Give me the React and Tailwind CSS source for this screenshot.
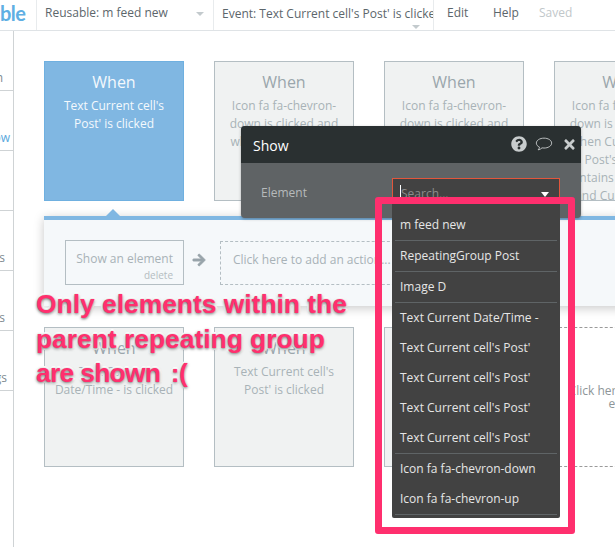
import React from "react";
import { FaQuestionCircle, FaTimes, FaArrowRight } from "react-icons/fa";

const OS = { fontFamily: '"Open Sans", sans-serif' };

function Card({ lines, active }) {
  return (
    <div className={`w-[140px] h-[140px] shrink-0 border overflow-hidden text-center pt-[9px] ${active ? "bg-[#80b7e2] border-[#6fb0e0] text-[#f4f9fd]" : "bg-[#f0f2f2] border-[#b4bec3] text-[#a8b2b7]"}`}>
      <div className={`text-[16px] leading-[22px] mb-[4px] ${active ? "text-[#f4f9fd]" : "text-[#9aa6ac]"}`}>When</div>
      {lines.map((l, i) => (
        <div key={i} className="text-[12px] leading-[18px] whitespace-nowrap">{l}</div>
      ))}
    </div>
  );
}

function SideRow({ label, pad, blue }) {
  return (
    <div className="h-[60px] border-b border-[#cfd3d5] flex items-end justify-end overflow-hidden pb-[3px]">
      <span className={`text-[12px] leading-[18px] shrink-0 ${pad} ${blue ? "text-[#59a8dd]" : "text-[#7d8a90]"}`}>{label}</span>
    </div>
  );
}

function Item({ children, line }) {
  return (
    <div className={`mx-[3px] px-[5px] h-[30px] flex items-center text-[12px] text-[#e6e6e6] whitespace-nowrap ${line ? "box-content border-b border-[#5f6466]" : ""}`}>
      {children}
    </div>
  );
}

export default function App() {
  return (
    <div className="relative w-[615px] h-[547px] overflow-hidden bg-white flex flex-col" style={OS}>
      <header className="h-[31px] shrink-0 flex border-b border-[#dfe3e6] text-[12px] text-[#5c666b]">
        <div className="w-[37px] shrink-0 border-r border-[#e8ebed] flex items-start pt-[1px] overflow-hidden">
          <span className="text-[#60afe3] text-[20px] leading-[24px] font-bold tracking-[-0.5px]" style={{ fontFamily: "Lato, sans-serif" }}>ble</span>
        </div>
        <div className="w-[177px] shrink-0 border-r border-[#e8ebed] relative pl-[8px] leading-[25px]">
          Reusable: m feed new
          <span className="absolute left-[159px] top-[12px] w-0 h-0 border-x-[4px] border-x-transparent border-t-[4px] border-t-[#c3cacd]" />
        </div>
        <div className="w-[220px] shrink-0 border-r border-[#e8ebed] relative pl-[8px] leading-[27px] overflow-hidden whitespace-nowrap">
          Event: Text Current cell's Post' is clicked
          <span className="absolute left-[198px] top-[25px] w-0 h-0 border-x-[4px] border-x-transparent border-t-[4px] border-t-[#c3cacd]" />
        </div>
        <div className="flex pl-[13px] leading-[25px]">
          <span className="w-[46px]">Edit</span>
          <span className="w-[46px]">Help</span>
          <span className="text-[#c1c7ca]">Saved</span>
        </div>
      </header>

      <div className="flex flex-1 min-h-0">
        <aside className="w-[14px] shrink-0 border-r border-[#cfd3d5]">
          <SideRow label="Design" pad="pr-[10px]" />
          <SideRow label="Workflow" pad="pr-[3px]" blue />
          <SideRow label="Data" pad="pr-[20px]" />
          <SideRow label="Styles" pad="pr-[8px]" />
          <SideRow label="Plugins" pad="pr-[8px]" />
          <SideRow label="Settings" pad="pr-[6px]" />
        </aside>

        <main className="flex-1 min-w-0 overflow-hidden pl-[30px] pt-[30px]">
          <div className="flex gap-[30px]">
            <Card active lines={["Text Current cell's", "Post' is clicked"]} />
            <Card lines={["Icon fa fa-chevron-", "down is clicked and", "when Current cell's"]} />
            <Card lines={["Icon fa fa-chevron-", "down is clicked and"]} />
            <Card lines={["Icon fa fa-chevron-", "down is clicked and", "when Current cell's", "Post's content", "contains Current cell", "and Current cell's"]} />
          </div>

          <section className="relative mt-[15px] w-[600px] h-[90px] bg-[#f5f8fa] border-t-4 border-[#80b7e2] shadow-[0_2px_10px_rgba(0,0,0,0.22)] pl-[21px] pt-[20px] flex items-start">
            <span className="absolute left-[62px] top-[-11px] w-0 h-0 border-x-[7px] border-x-transparent border-b-[7px] border-b-[#80b7e2]" />
            <div className="w-[119px] h-[45px] border border-[#b4bec3] text-right pr-[10px] pt-[9px]">
              <div className="text-[12px] leading-[18px] text-[#a8b2b7]">Show an element</div>
              <div className="text-[10px] leading-[12px] text-[#b4bdc1] mt-[1px]">delete</div>
            </div>
            <FaArrowRight className="text-[#98a4aa] stroke-current stroke-[30] w-[14px] h-[14px] ml-[8px] mr-[14px] mt-[13px]" />
            <div className="w-[180px] h-[44px] mt-[1px] border border-dashed border-[#b4bec3] pl-[12px] leading-[36px] text-[12px] text-[#a8b2b7] whitespace-nowrap">
              Click here to add an action...
            </div>
          </section>

          <div className="flex gap-[30px] mt-[21px]">
            <Card lines={["Text Current", "Date/Time - is clicked"]} />
            <Card lines={["Text Current cell's", "Post' is clicked"]} />
            <Card lines={[]} />
            <div className="w-[140px] h-[140px] shrink-0 border border-dashed border-[#9a9a9a] flex flex-col justify-center text-center text-[12px] leading-[13px] text-[#8d9598]">
              <div className="whitespace-nowrap">Click here to add an</div>
              <div>event</div>
            </div>
          </div>
        </main>
      </div>

      {/* Show dialog */}
      <div className="absolute left-[241px] top-[126px] w-[340px] h-[92px] rounded-[4px] overflow-hidden bg-[#5f6365] shadow-[0_1px_3px_rgba(0,0,0,0.3)]">
        <div className="h-[37px] bg-[#2a3031] pl-[12px] pt-[1px] leading-[38px] text-[14px] text-white relative">
          Show
          <div className="absolute left-[270px] top-[10px] flex items-center text-[#c8cccd]">
            <FaQuestionCircle className="w-[16px] h-[16px]" />
            <svg viewBox="0 0 20 16" className="w-[18px] h-[16px] ml-[8px]" fill="none" stroke="#c8cccd" strokeWidth="1">
              <path d="M10 1.5c4.6 0 8.5 2.3 8.5 5.5s-3.9 5.5-8.5 5.500c-.8 0-1.500 0-2.200-.2-1 1-2.500 2-4.300 2.200.8-.8 1.400-1.900 1.500-3C2.800 10.500 1.500 8.900 1.500 7c0-3.200 3.900-5.500 8.500-5.500z" />
            </svg>
            <FaTimes className="w-[15px] h-[15px] ml-[9px]" />
          </div>
        </div>
        <div className="absolute left-[20px] top-[58px] text-[12px] leading-[18px] text-[#b6babb]">Element</div>
      </div>

      {/* Search input */}
      <div className="absolute left-[392px] top-[178px] w-[168px] h-[30px] bg-[#424242] border border-[#e2563c] border-b-0 pl-[7px] text-[12px] leading-[30px] text-[#8b8b8b]">
        <span className="border-l border-white">Search...</span>
        <span className="absolute left-[148px] top-[13px] w-0 h-0 border-x-[4px] border-x-transparent border-t-[5px] border-t-white" />
      </div>

      {/* Dropdown */}
      <div className="absolute left-[392px] top-[204px] w-[168px] h-[314px] bg-[#424242] pt-[6px] rounded-b-[2px]">
        <Item line>m feed new</Item>
        <Item line>RepeatingGroup Post</Item>
        <Item line>Image D</Item>
        <Item>Text Current Date/Time -</Item>
        <Item>Text Current cell's Post'</Item>
        <Item>Text Current cell's Post'</Item>
        <Item>Text Current cell's Post'</Item>
        <Item line>Text Current cell's Post'</Item>
        <Item>Icon fa fa-chevron-down</Item>
        <Item line>Icon fa fa-chevron-up</Item>
      </div>

      {/* Annotation */}
      <div className="absolute left-[375px] top-[197px] w-[200px] h-[337px] border-[7px] border-[#ff2f6e] rounded-[3px]" />
      <div
        className="absolute left-[36px] top-[287px] text-[26.4px] leading-[34.5px] font-bold text-[#ff2f6e] whitespace-nowrap [text-shadow:0_1px_3px_#666,1px_1px_0_#fff,-1px_-1px_0_#fff,1px_-1px_0_#fff,-1px_1px_0_#fff,2px_0_0_#fff,-2px_0_0_#fff,0_2px_0_#fff,0_-2px_0_#fff]"
        style={{ fontFamily: '"Liberation Sans", Arial, sans-serif' }}
      >
        <div>Only elements within the</div>
        <div>parent repeating group</div>
        <div className="tracking-[-0.7px]">are shown <span className="ml-[4px]">:(</span></div>
      </div>
    </div>
  );
}
